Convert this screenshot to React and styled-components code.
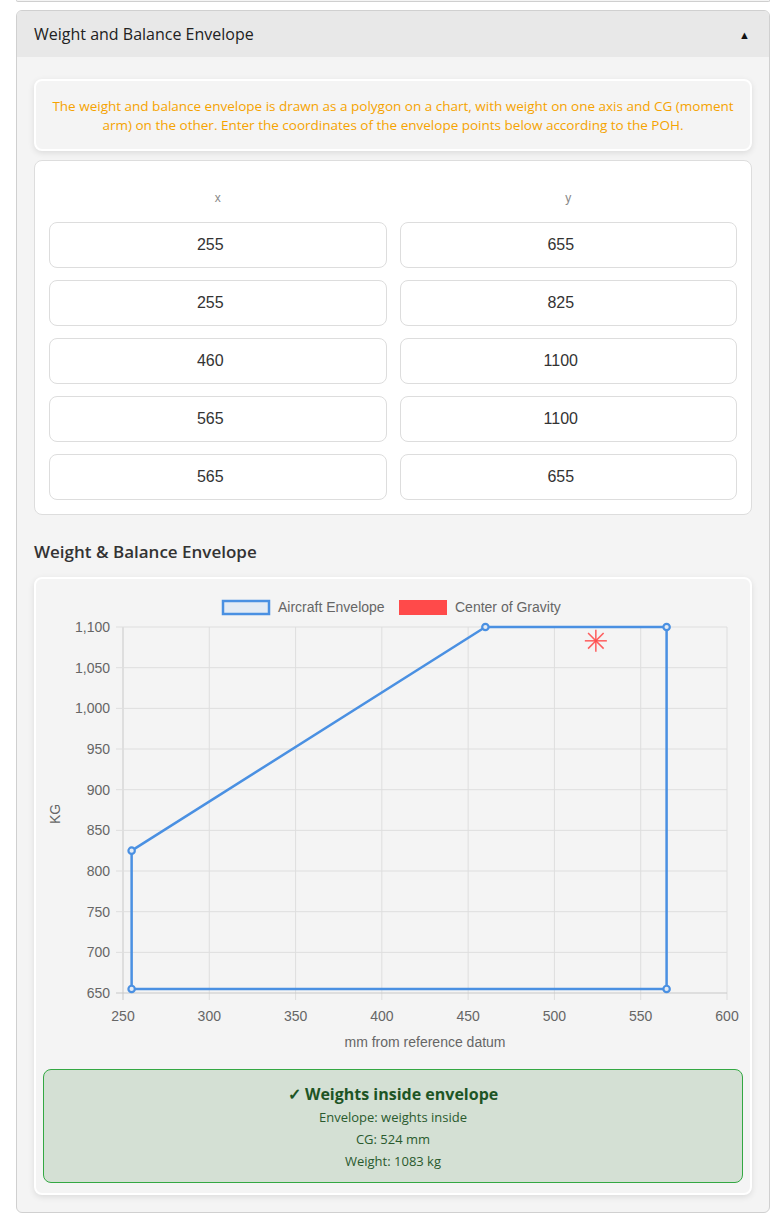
import React from 'react';
import styled, { createGlobalStyle } from 'styled-components';

const GlobalStyle = createGlobalStyle`
    body {
        margin: 0;
        background: #ffffff;
        font-family: "Open Sans", "Noto Sans", sans-serif;
    }
`;

const Page = styled.div`
    padding: 0 10px 0 16px;
`;

const PrevPanel = styled.div`
    height: 1px;
    border: 1px solid #cfcfcf;
    border-top: none;
    border-radius: 0 0 6px 6px;
    background: #f4f4f4;
    margin-bottom: 8px;
`;

const Panel = styled.div`
    border: 1px solid #d0d0d0;
    border-radius: 6px;
    background: #f4f4f4;
    overflow: hidden;
`;

const Header = styled.div`
    height: 46px;
    padding: 0 17px;
    display: flex;
    align-items: center;
    justify-content: space-between;
    background: #e8e8e8;
    color: #222;
    font-size: 16px;
`;

const Arrow = styled.span`
    font-size: 11px;
    color: #111;
    margin-right: 2px;
`;

const Body = styled.div`
    padding: 22px 17px 17px;
    display: flex;
    flex-direction: column;
`;

const InfoBox = styled.div`
    background: #f4f4f4;
    border: 2px solid #ffffff;
    border-radius: 8px;
    box-shadow: 0px 2px 6px rgba(0, 0, 0, 0.1);
    padding: 16px 10px 14px;
    color: #f5a300;
    font-size: 13.5px;
    line-height: 19px;
    text-align: center;
    margin-bottom: 9px;
`;

const TableCard = styled.div`
    background: #ffffff;
    border: 1px solid #dddddd;
    border-radius: 8px;
    padding: 0 14px 14px;
    display: grid;
    grid-template-columns: 1fr 1fr;
    column-gap: 13px;
    row-gap: 12px;
`;

const ColLabel = styled.div`
    padding: 30px 0 5px;
    line-height: 14px;
    text-align: center;
    font-family: "Liberation Sans", Arial, sans-serif;
    font-size: 12px;
    color: #888;
`;

const Cell = styled.input`
    box-sizing: border-box;
    width: 100%;
    height: 46px;
    border: 1px solid #dddddd;
    border-radius: 8px;
    background: #fff;
    text-align: center;
    font-family: "Liberation Sans", Arial, sans-serif;
    font-size: 16px;
    color: #333;
    outline: none;
`;

const SectionTitle = styled.h3`
    margin: 25px 0 13px;
    line-height: 24px;
    font-size: 17px;
    font-weight: 600;
    color: #333;
`;

const ChartCard = styled.div`
    background: #f4f4f4;
    border: 2px solid #ffffff;
    border-radius: 8px;
    box-shadow: 0px 2px 6px rgba(0, 0, 0, 0.1);
    padding: 7px 7px 10px;
`;

const ChartSvg = styled.svg`
    display: block;
    font-family: "Liberation Sans", Arial, sans-serif;
    margin-bottom: 10px;
`;

const Status = styled.div`
    background: #d4e0d4;
    border: 1px solid #34a843;
    border-radius: 8px;
    padding: 12px 10px 10px;
    text-align: center;
    color: #2a5a2e;
`;

const StatusTitle = styled.div`
    font-size: 16px;
    font-weight: 700;
    line-height: 24px;
    color: #1d5525;
`;

const StatusLine = styled.div`
    font-size: 13px;
    line-height: 22px;
`;

const points = [
    [255, 655],
    [255, 825],
    [460, 1100],
    [565, 1100],
    [565, 655],
];

const cg = [524, 1083];

const PL = 80, PR = 684, PT = 41, PB = 407;
const sx = (v) => PL + (v - 250) * (PR - PL) / 350;
const sy = (v) => PB - (v - 650) * (PB - PT) / 450;

const xTicks = [250, 300, 350, 400, 450, 500, 550, 600];
const yTicks = [650, 700, 750, 800, 850, 900, 950, 1000, 1050, 1100];

function Star({ x, y }) {
    const r = 11;
    const d = r * 0.7071;
    return (
        <g stroke="rgba(255, 77, 77, 0.9)" strokeWidth="1.5">
            <line x1={x - r} y1={y} x2={x + r} y2={y} />
            <line x1={x} y1={y - r} x2={x} y2={y + r} />
            <line x1={x - d} y1={y - d} x2={x + d} y2={y + d} />
            <line x1={x - d} y1={y + d} x2={x + d} y2={y - d} />
        </g>
    );
}

function Chart() {
    const path = points.map(([x, y]) => `${sx(x)},${sy(y)}`).join(' ');
    return (
        <ChartSvg width="700" height="473" viewBox="0 0 700 473">
            <rect x="180" y="15" width="46" height="13" fill="#e4ebf4" stroke="#4a90e2" strokeWidth="2.5" />
            <text x="235" y="26" fontSize="14" fill="#666">Aircraft Envelope</text>
            <rect x="356" y="14" width="48" height="15" fill="#ff4a4a" />
            <text x="412" y="26" fontSize="14" fill="#666">Center of Gravity</text>

            {xTicks.map((t) => (
                <g key={'x' + t}>
                    <line x1={sx(t)} y1={PT} x2={sx(t)} y2={PB + 7} stroke={t === 250 ? '#c8c8c8' : '#dedede'} strokeWidth="1" />
                    <text x={sx(t)} y={435} fontSize="14" fill="#666" textAnchor="middle">{t}</text>
                </g>
            ))}
            {yTicks.map((t) => (
                <g key={'y' + t}>
                    <line x1={PL - 7} y1={sy(t)} x2={PR} y2={sy(t)} stroke={t === 650 ? '#c8c8c8' : '#dedede'} strokeWidth="1" />
                    <text x={67} y={sy(t) + 5} fontSize="14" fill="#666" textAnchor="end">{t.toLocaleString('en-US')}</text>
                </g>
            ))}

            <text x={(PL + PR) / 2} y="461" fontSize="14" fill="#666" textAnchor="middle">mm from reference datum</text>
            <text x="0" y="0" fontSize="14" fill="#666" textAnchor="middle" transform="translate(17 228) rotate(-90)">KG</text>

            <polygon points={path} fill="none" stroke="#4a90e2" strokeWidth="2.5" strokeLinejoin="round" />
            {points.map(([x, y], i) => (
                <circle key={i} cx={sx(x)} cy={sy(y)} r="3.2" fill="#e4ebf4" stroke="#4a90e2" strokeWidth="2.2" />
            ))}
            <Star x={sx(cg[0])} y={sy(cg[1])} />
        </ChartSvg>
    );
}

export default function App() {
    return (
        <Page>
            <GlobalStyle />
            <PrevPanel />
            <Panel>
                <Header>
                    <span>Weight and Balance Envelope</span>
                    <Arrow>▲</Arrow>
                </Header>
                <Body>
                    <InfoBox>
                        The weight and balance envelope is drawn as a polygon on a chart, with weight on one axis and CG (moment
                        arm) on the other. Enter the coordinates of the envelope points below according to the POH.
                    </InfoBox>
                    <TableCard>
                        <ColLabel>x</ColLabel>
                        <ColLabel>y</ColLabel>
                        {points.map(([x, y], i) => (
                            <React.Fragment key={i}>
                                <Cell type="number" defaultValue={x} />
                                <Cell type="number" defaultValue={y} />
                            </React.Fragment>
                        ))}
                    </TableCard>
                    <SectionTitle>Weight &amp; Balance Envelope</SectionTitle>
                    <ChartCard>
                        <Chart />
                        <Status>
                            <StatusTitle>✓ Weights inside envelope</StatusTitle>
                            <StatusLine>Envelope: weights inside</StatusLine>
                            <StatusLine>CG: 524 mm</StatusLine>
                            <StatusLine>Weight: 1083 kg</StatusLine>
                        </Status>
                    </ChartCard>
                </Body>
            </Panel>
        </Page>
    );
}
